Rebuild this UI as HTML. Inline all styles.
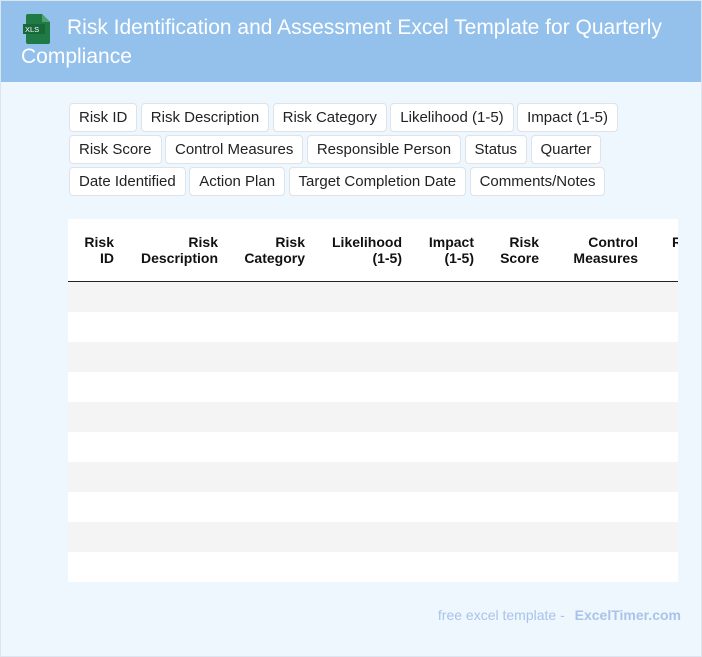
<!DOCTYPE html>
<html><head><style>
body{margin:0;width:702px;height:657px;background:#eef6fe;font-family:"Liberation Sans",Arial,sans-serif;overflow:hidden;position:relative}
.wrap{position:absolute;left:0;top:0;width:700px;height:655px;border:1px solid #dde6f0;}
.hdr{position:absolute;left:1px;top:1px;width:700px;height:81px;background:#93c1ec;}
.title{position:absolute;left:21px;top:13px;width:670px;color:#fff;font-size:21px;line-height:29px;text-indent:46px}
.icon{position:absolute;left:22px;top:14px}
.tags{position:absolute;left:69px;top:103px;width:560px}
.tag{display:inline-block;background:#fff;border:1px solid #dfe3e8;border-radius:4px;height:27px;line-height:27px;padding:0 9px;font-size:15px;color:#222;margin:0 0 3px 0;margin-right:-1px;box-sizing:content-box}
.tbl{position:absolute;left:68px;top:219px;width:610px;height:363px;background:#fff;overflow:hidden}
table{border-collapse:collapse;table-layout:fixed;width:720px}
th{font-size:14px;font-weight:bold;text-align:right;padding:0 10px;height:62px;line-height:16px;border-bottom:1.5px solid #222;vertical-align:middle;color:#111}
td{height:30px;padding:0}
tr.g td{background:#f4f4f4}
.foot{position:absolute;right:21px;top:607px;font-size:14px;color:#a9c4e8}
.foot b{margin-left:6px}
</style></head><body>
<div class="wrap"></div>
<div class="hdr"></div>
<svg class="icon" width="30" height="30" viewBox="0 0 30 30"><path d="M6 0h14l8 8v20a2 2 0 0 1-2 2H6a2 2 0 0 1-2-2V2a2 2 0 0 1 2-2z" fill="#1f7a45"/><path d="M20 0l8 8h-8z" fill="#4aa36e"/><rect x="1" y="10" width="22" height="10" fill="#17683a"/><text x="3" y="18" font-size="7.5" fill="#fff" font-family="Liberation Sans">XLS</text></svg>
<div class="title">Risk Identification and Assessment Excel Template for Quarterly Compliance</div>
<div class="tags">
<span class="tag">Risk ID</span> <span class="tag">Risk Description</span> <span class="tag">Risk Category</span> <span class="tag">Likelihood (1-5)</span> <span class="tag">Impact (1-5)</span>
<span class="tag">Risk Score</span> <span class="tag">Control Measures</span> <span class="tag">Responsible Person</span> <span class="tag">Status</span> <span class="tag">Quarter</span>
<span class="tag">Date Identified</span> <span class="tag">Action Plan</span> <span class="tag">Target Completion Date</span> <span class="tag">Comments/Notes</span>
</div>
<div class="tbl"><table>
<colgroup><col style="width:56px"><col style="width:104px"><col style="width:87px"><col style="width:97px"><col style="width:72px"><col style="width:65px"><col style="width:99px"><col style="width:140px"></colgroup>
<tr><th>Risk<br>ID</th><th>Risk<br>Description</th><th>Risk<br>Category</th><th>Likelihood<br>(1-5)</th><th>Impact<br>(1-5)</th><th>Risk<br>Score</th><th>Control<br>Measures</th><th style="text-align:left;padding-left:24px">Responsible<br>&nbsp;</th></tr>
<tr class="g"><td colspan="8"></td></tr><tr><td colspan="8"></td></tr>
<tr class="g"><td colspan="8"></td></tr><tr><td colspan="8"></td></tr>
<tr class="g"><td colspan="8"></td></tr><tr><td colspan="8"></td></tr>
<tr class="g"><td colspan="8"></td></tr><tr><td colspan="8"></td></tr>
<tr class="g"><td colspan="8"></td></tr><tr><td colspan="8"></td></tr>
</table></div>
<div class="foot">free excel template - <b>ExcelTimer.com</b></div>
</body></html>
